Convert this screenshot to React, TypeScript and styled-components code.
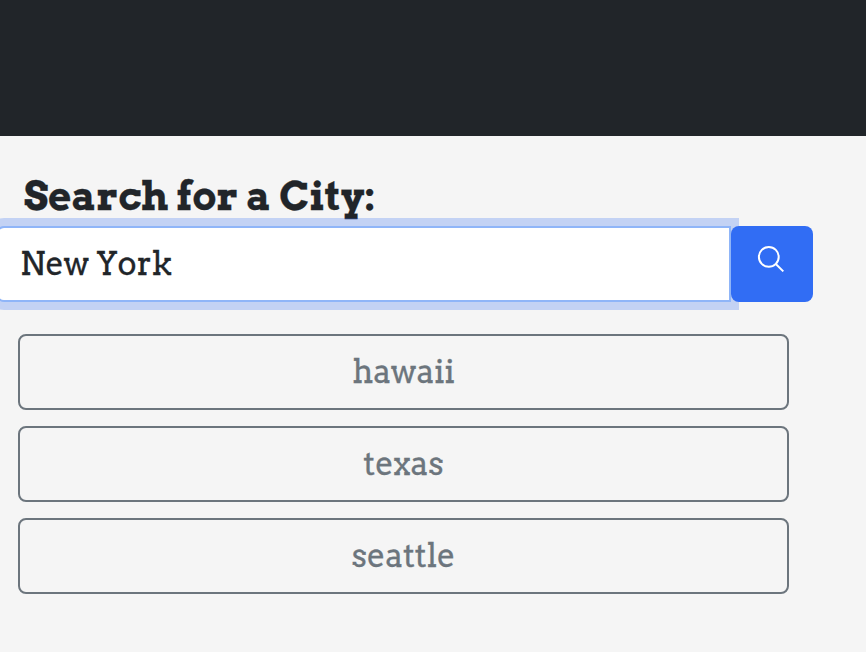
import React, { useState } from "react";
import styled, { createGlobalStyle } from "styled-components";

const GlobalStyle = createGlobalStyle`
  *, *::before, *::after { box-sizing: border-box; }
  body {
    margin: 0;
    overflow: hidden;
    background: #f5f5f5;
    color: #212529;
    font-family: Arvo, "DejaVu Serif", serif;
    font-size: 32px;
    line-height: 48px;
    -webkit-text-stroke: 0.3px currentColor;
  }
`;

const Page = styled.div`
  height: 652px;
  overflow: hidden;
`;

const Header = styled.header`
  height: 136px;
  background: #212529;
`;

const SearchTitle = styled.h2`
  margin: 36px 0 0 24px;
  font-size: 40px;
  font-weight: 700;
  line-height: 48px;
  white-space: nowrap;
`;

const SearchForm = styled.form`
  display: flex;
  width: 817px;
  height: 76px;
  margin: 6px 0 32px -4px;
`;

const CityInput = styled.input`
  flex: 1;
  min-width: 0;
  padding: 12px 22px;
  border: 2px solid #8fb5f8;
  border-radius: 8px 0 0 8px;
  outline: 0;
  background: #fff;
  color: #212529;
  box-shadow: 0 0 0 8px rgba(49, 109, 244, 0.25);
  font: inherit;
  line-height: 48px;
`;

const SearchButton = styled.button`
  display: flex;
  z-index: 1;
  width: 82px;
  padding: 18px 0 0 25px;
  border: 0;
  border-radius: 8px;
  background: #316df4;
  color: #fff;
`;

const CityList = styled.div`
  display: grid;
  width: 771px;
  gap: 16px;
  margin-left: 18px;
`;

const CityButton = styled.button`
  height: 76px;
  padding: 0;
  border: 2px solid #6c757d;
  border-radius: 8px;
  background: transparent;
  color: #6c757d;
  font: inherit;
`;

const cities = ["hawaii", "texas", "seattle"];

export default function App() {
  const [city, setCity] = useState("New York");
  return (
    <Page>
      <GlobalStyle />
      <Header />
      <main>
        <SearchTitle>Search for a City:</SearchTitle>
        <SearchForm onSubmit={(event) => event.preventDefault()}>
          <CityInput
            aria-label="City"
            value={city}
            onChange={(event) => setCity(event.target.value)}
          />
          <SearchButton aria-label="Search">
            <svg width="30" height="30" viewBox="0 0 30 30" fill="none" stroke="currentColor" strokeWidth="2">
              <circle cx="12.8" cy="12.9" r="9.9" />
              <path d="m19.8 20 7.5 7.4" />
            </svg>
          </SearchButton>
        </SearchForm>
        <CityList>
          {cities.map((name) => (
            <CityButton key={name} onClick={() => setCity(name)}>
              {name}
            </CityButton>
          ))}
        </CityList>
      </main>
    </Page>
  );
}
